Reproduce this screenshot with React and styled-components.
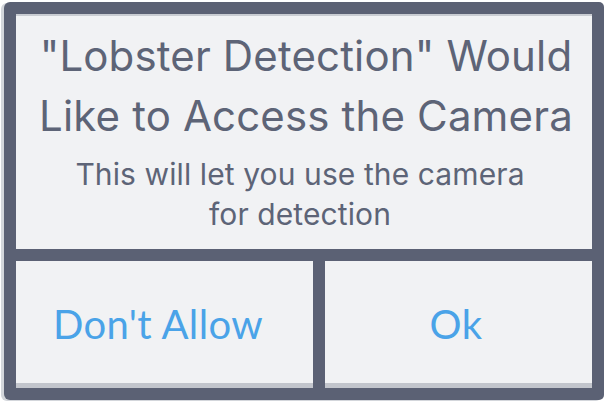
import React from "react";
import styled, { createGlobalStyle } from "styled-components";

const Global = createGlobalStyle`
  html, body { margin: 0; padding: 0; background: #ffffff; }
  body { font-family: Inter, "Liberation Sans", sans-serif; }
`;

const Page = styled.div`
  width: 604px;
  height: 402px;
  padding: 2px 0 0 4px;
  box-sizing: border-box;
  overflow: hidden;
`;

const Dialog = styled.div`
  width: 600px;
  height: 398px;
  box-sizing: border-box;
  padding: 12px;
  display: grid;
  grid-template-columns: 297px 267px;
  grid-template-rows: 235px 127px;
  gap: 12px;
  background: #5b6174;
  border-radius: 6px 5px 5px 6px;
  box-shadow: -3px 1px 0 #d3d6db;
`;

const Header = styled.div`
  grid-column: 1 / span 2;
  background: #f1f2f4;
  box-shadow: inset 0 2px 0 #c9ccd2;
  display: flex;
  flex-direction: column;
  align-items: center;
  color: #5d6477;
  text-align: center;
`;

const Title = styled.h1`
  margin: 12px 0 0 4px;
  font-weight: 400;
  font-size: 42px;
  line-height: 60px;
  letter-spacing: 0.15px;
`;

const Message = styled.p`
  margin: 8px 8px 0 0;
  font-size: 30px;
  line-height: 40px;
  font-weight: 400;
  letter-spacing: 0.1px;
`;

const Button = styled.button`
  all: unset;
  background: #f1f2f4;
  box-shadow: inset 0 -5px 0 #c2c5cc;
  display: flex;
  align-items: center;
  justify-content: center;
  padding: 0 ${(p) => p.$shift || 0}px 2px 0;
  box-sizing: border-box;
  font-family: Lato, "Noto Sans", sans-serif;
  font-size: 40px;
  font-weight: 400;
  letter-spacing: 0.4px;
  color: #4aa3e8;
  cursor: pointer;
`;

export default function App() {
  return (
    <>
      <Global />
      <Page>
        <Dialog>
          <Header>
            <Title>
              "Lobster Detection" Would
              <br />
              Like to Access the Camera
            </Title>
            <Message>
              This will let you use the camera
              <br />
              for detection
            </Message>
          </Header>
          <Button $shift={13}>Don't Allow</Button>
          <Button $shift={5}>Ok</Button>
        </Dialog>
      </Page>
    </>
  );
}
